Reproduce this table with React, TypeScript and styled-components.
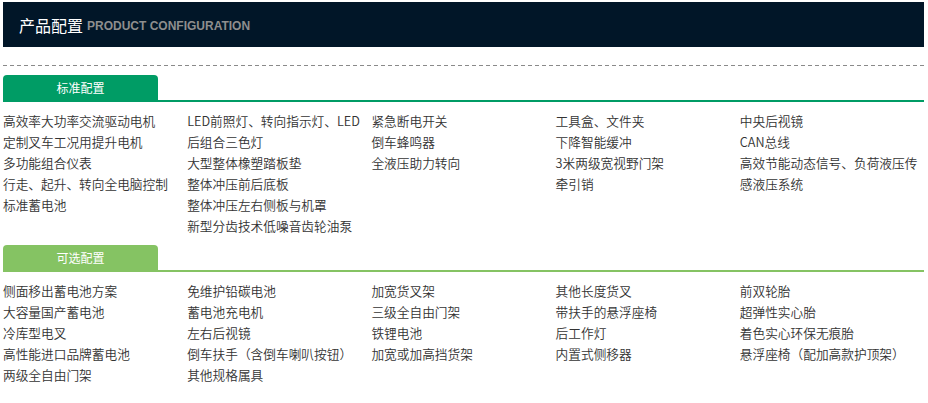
import React from "react";
import styled, { createGlobalStyle } from "styled-components";

const GlobalStyle = createGlobalStyle`
  html, body { margin: 0; padding: 0; background: #ffffff; }
  body { font-family: "Noto Sans CJK SC", "Liberation Sans", sans-serif; }
  * { box-sizing: border-box; }
`;

const Page = styled.div`
  width: 928px;
  padding: 2px 4px 0 3px;
`;

const TitleBar = styled.div`
  height: 45px;
  background: #011628;
  display: flex;
  align-items: center;
  padding-left: 16px;
`;

const TitleCn = styled.span`
  font-family: "Noto Sans CJK SC", sans-serif;
  font-size: 16px;
  color: #ffffff;
  line-height: 1;
`;

const TitleEn = styled.span`
  font-family: "Liberation Sans", Arial, sans-serif;
  font-weight: bold;
  font-size: 12px;
  color: #8e8e8e;
  margin-left: 4px;
  margin-top: 2px;
`;

const Dashed = styled.div`
  margin-top: 18px;
  height: 1px;
  background: repeating-linear-gradient(to right, #8a8a8a 0 4px, transparent 4px 7px);
`;

const Section = styled.section`
  margin-top: 9px;
`;

const TabRow = styled.div<{ $color: string }>`
  display: flex;
  border-bottom: 2px solid ${(p) => p.$color};
`;

const Tab = styled.div<{ $color: string }>`
  width: 155px;
  height: 25px;
  background: ${(p) => p.$color};
  border-radius: 4px 4px 0 0;
  color: #ffffff;
  font-size: 12px;
  display: flex;
  align-items: center;
  justify-content: center;
`;

const Columns = styled.div`
  display: grid;
  grid-template-columns: repeat(5, 1fr);
  padding-top: 8px;
`;

const List = styled.ul`
  list-style: none;
  margin: 0;
  padding: 0;
`;

const Item = styled.li`
  font-size: 12.7px;
  font-weight: 350;
  line-height: 21px;
  color: #333333;
  white-space: nowrap;
`;

type Col = string[][];

const standard: Col[] = [
  [["高效率大功率交流驱动电机"], ["定制叉车工况用提升电机"], ["多功能组合仪表"], ["行走、起升、转向全电脑控制"], ["标准蓄电池"]],
  [["LED前照灯、转向指示灯、LED", "后组合三色灯"], ["大型整体橡塑踏板垫"], ["整体冲压前后底板"], ["整体冲压左右侧板与机罩"], ["新型分齿技术低噪音齿轮油泵"]],
  [["紧急断电开关"], ["倒车蜂鸣器"], ["全液压助力转向"]],
  [["工具盒、文件夹"], ["下降智能缓冲"], ["3米两级宽视野门架"], ["牵引销"]],
  [["中央后视镜"], ["CAN总线"], ["高效节能动态信号、负荷液压传", "感液压系统"]],
];

const optional: Col[] = [
  [["侧面移出蓄电池方案"], ["大容量国产蓄电池"], ["冷库型电叉"], ["高性能进口品牌蓄电池"], ["两级全自由门架"]],
  [["免维护铅碳电池"], ["蓄电池充电机"], ["左右后视镜"], ["倒车扶手（含倒车喇叭按钮）"], ["其他规格属具"]],
  [["加宽货叉架"], ["三级全自由门架"], ["铁锂电池"], ["加宽或加高挡货架"]],
  [["其他长度货叉"], ["带扶手的悬浮座椅"], ["后工作灯"], ["内置式侧移器"]],
  [["前双轮胎"], ["超弹性实心胎"], ["着色实心环保无痕胎"], ["悬浮座椅（配加高款护顶架）"]],
];

function ConfigSection({ title, color, cols }: { title: string; color: string; cols: Col[] }) {
  return (
    <Section>
      <TabRow $color={color}>
        <Tab $color={color}>{title}</Tab>
      </TabRow>
      <Columns>
        {cols.map((col, i) => (
          <List key={i}>
            {col.map((lines, j) => (
              <Item key={j}>
                {lines.map((l, k) => (
                  <React.Fragment key={k}>
                    {k > 0 && <br />}
                    {l}
                  </React.Fragment>
                ))}
              </Item>
            ))}
          </List>
        ))}
      </Columns>
    </Section>
  );
}

export default function App() {
  return (
    <>
      <GlobalStyle />
      <Page>
        <TitleBar>
          <TitleCn>产品配置</TitleCn>
          <TitleEn>PRODUCT CONFIGURATION</TitleEn>
        </TitleBar>
        <Dashed />
        <ConfigSection title="标准配置" color="#009c65" cols={standard} />
        <ConfigSection title="可选配置" color="#85c363" cols={optional} />
      </Page>
    </>
  );
}
